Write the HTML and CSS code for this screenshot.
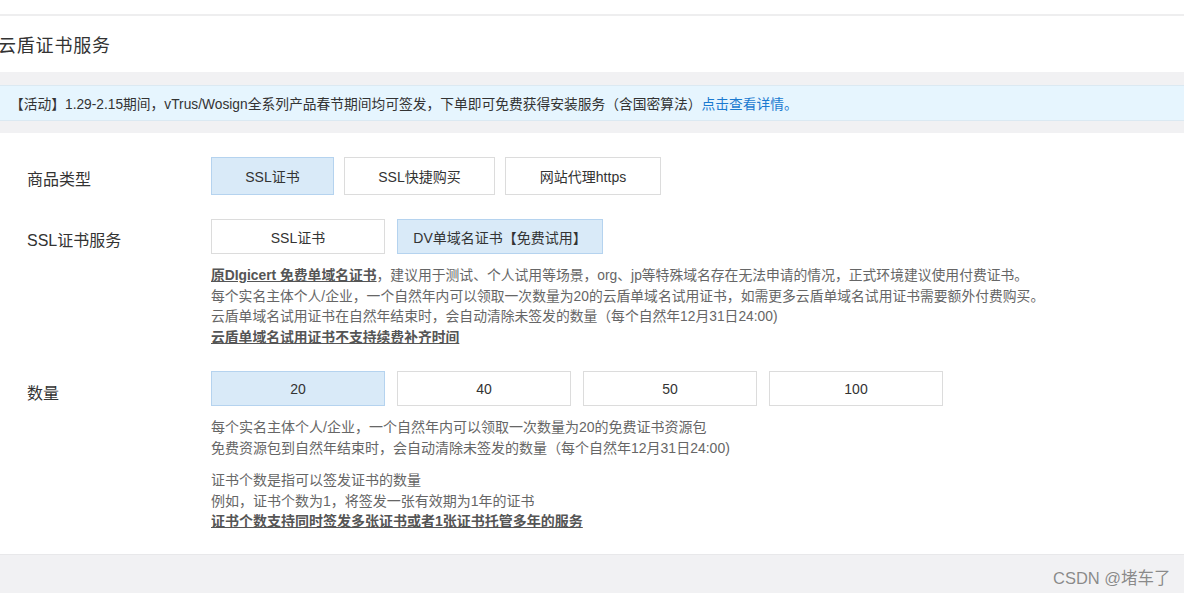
FILE: index.html
```html
<!DOCTYPE html>
<html lang="zh-CN">
<head>
<meta charset="utf-8">
<title>云盾证书服务</title>
<link rel="stylesheet" href="styles.css">
</head>
<body>
<div class="topbar"></div>
<div class="header"><h1 class="title">云盾证书服务</h1></div>
<div class="notice-wrap">
  <div class="notice">【活动】1.29-2.15期间，vTrus/Wosign全系列产品春节期间均可签发，下单即可免费获得安装服务（含国密算法）<a class="link" href="#">点击查看详情。</a></div>
</div>
<div class="panel">
  <div class="row row-type">
    <div class="label">商品类型</div>
    <div class="field">
      <div class="opts">
        <div class="opt sel w123">SSL证书</div>
        <div class="opt w151">SSL快捷购买</div>
        <div class="opt w156">网站代理https</div>
      </div>
    </div>
  </div>
  <div class="row row-svc">
    <div class="label">SSL证书服务</div>
    <div class="field">
      <div class="opts gap12">
        <div class="opt w174">SSL证书</div>
        <div class="opt sel w206">DV单域名证书【免费试用】</div>
      </div>
      <div class="desc desc-svc">
        <p><span class="em">原DIgicert 免费单域名证书</span>，建议用于测试、个人试用等场景，org、jp等特殊域名存在无法申请的情况，正式环境建议使用付费证书。</p>
        <p>每个实名主体个人/企业，一个自然年内可以领取一次数量为20的云盾单域名试用证书，如需更多云盾单域名试用证书需要额外付费购买。</p>
        <p>云盾单域名试用证书在自然年结束时，会自动清除未签发的数量（每个自然年12月31日24:00)</p>
        <p><span class="em">云盾单域名试用证书不支持续费补齐时间</span></p>
      </div>
    </div>
  </div>
  <div class="row row-qty">
    <div class="label">数量</div>
    <div class="field">
      <div class="opts gap12">
        <div class="opt sel w174">20</div>
        <div class="opt w174">40</div>
        <div class="opt w174">50</div>
        <div class="opt w174">100</div>
      </div>
      <div class="desc">
        <p>每个实名主体个人/企业，一个自然年内可以领取一次数量为20的免费证书资源包</p>
        <p>免费资源包到自然年结束时，会自动清除未签发的数量（每个自然年12月31日24:00)</p>
      </div>
      <div class="desc desc2">
        <p>证书个数是指可以签发证书的数量</p>
        <p>例如，证书个数为1，将签发一张有效期为1年的证书</p>
        <p><span class="em">证书个数支持同时签发多张证书或者1张证书托管多年的服务</span></p>
      </div>
    </div>
  </div>
</div>
<div class="footer"></div>
<div class="watermark">CSDN @堵车了</div>
</body>
</html>
```
FILE: styles.css
```css
html, body {
  margin: 0;
  padding: 0;
}
body {
  background: #f1f1f3;
  font-family: "Liberation Sans", "Noto Sans CJK SC", sans-serif;
  color: #333;
  height: 593px;
  overflow: hidden;
  position: relative;
}
.topbar {
  height: 14px;
  background: #fff;
  border-bottom: 2px solid #eeeeef;
}
.header {
  background: #fff;
  height: 56px;
  display: flex;
  align-items: center;
}
.title {
  margin: 0 0 0 -2px;
  font-size: 18px;
  font-weight: normal;
  color: #333;
  letter-spacing: 0.8px;
}
.notice-wrap {
  padding: 13px 0 12px;
}
.notice {
  height: 34px;
  background: #e6f5fe;
  border-top: 1px solid #dbe9f2;
  border-bottom: 1px solid #dbe9f2;
  padding-left: 10px;
  display: flex;
  align-items: center;
  font-size: 13.75px;
  color: #333;
}
.link {
  color: #1a7ad0;
  text-decoration: none;
}
.panel {
  background: #fff;
  height: 422px;
  box-sizing: border-box;
  padding-top: 24px;
  border-bottom: 1px solid #e8e8ea;
}
.row {
  display: flex;
  align-items: flex-start;
}
.row-svc {
  margin-top: 24px;
}
.row-qty {
  margin-top: 23px;
}
.label {
  width: 184px;
  padding-left: 27px;
  padding-top: 13px;
  font-size: 16px;
  line-height: 20px;
  color: #333;
  flex: none;
}
.row-svc .label {
  padding-top: 12px;
}
.field {
  display: flex;
  flex-direction: column;
}
.opts {
  display: flex;
  gap: 10px;
}
.gap12 { gap: 12px; }
.opt {
  box-sizing: border-box;
  height: 35px;
  border: 1px solid #dcdcdc;
  background: #fff;
  display: flex;
  align-items: center;
  justify-content: center;
  font-size: 14px;
  color: #333;
}
.row-type .opt {
  height: 38px;
}
.opt.sel {
  background: #d9eaf8;
  border-color: #b5d3ef;
}
.w123 { width: 123px; }
.w151 { width: 151px; }
.w156 { width: 156px; }
.w174 { width: 174px; }
.w206 { width: 206px; }
.desc {
  margin-top: 11px;
  font-size: 14px;
  line-height: 20.5px;
  color: #666;
}
.desc-svc {
  font-size: 13.8px;
  margin-top: 12px;
}
.desc2 {
  margin-top: 12px;
}
.desc p {
  margin: 0;
  white-space: nowrap;
}
.em {
  color: #555;
  font-weight: bold;
  text-decoration: underline;
}
.footer {
  height: 38px;
}
.watermark {
  position: absolute;
  left: 1053px;
  top: 565px;
  font-size: 16.5px;
  color: #8a8a8a;
  text-shadow: 0 0 1px #fff;
  white-space: nowrap;
}
```
